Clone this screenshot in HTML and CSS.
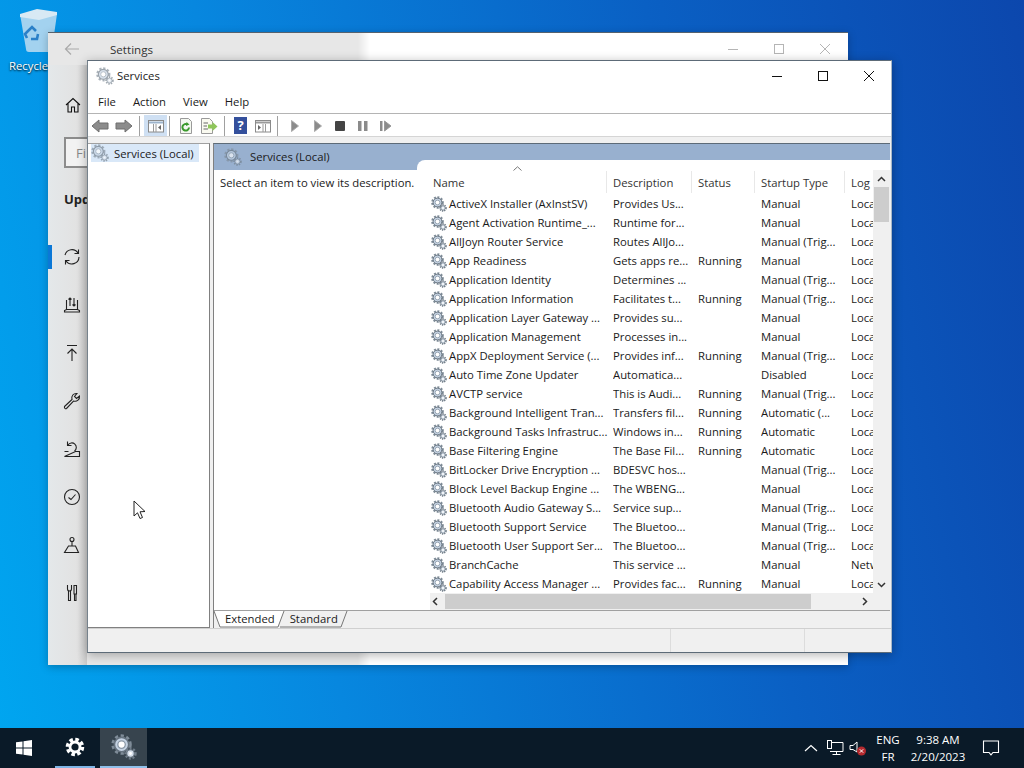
FILE: index.html
```html
<!DOCTYPE html>
<html lang="en">
<head>
    <meta charset="UTF-8">
    <title>Services</title>
    <link rel="stylesheet" href="styles.css">
</head>
<body>
    <svg class="defs" width="0" height="0">
        <symbol id="gear" viewBox="0 0 16 16">
            <circle cx="6.5" cy="6.5" r="5.2" fill="none" stroke="#7f8c98" stroke-width="2.2" stroke-dasharray="1.9 1.5"/>
            <circle cx="6.5" cy="6.5" r="4.4" fill="#c4d2e2" stroke="#66737f" stroke-width="1"/>
            <circle cx="6.5" cy="6.5" r="2.3" fill="#fff" stroke="#8a98a6" stroke-width=".8"/>
            <circle cx="12" cy="12" r="3" fill="none" stroke="#6f7c88" stroke-width="1.6" stroke-dasharray="1.2 1"/>
            <circle cx="12" cy="12" r="2.3" fill="#d5dfea" stroke="#66737f" stroke-width=".7"/>
            <circle cx="12" cy="12" r=".9" fill="#fff"/>
        </symbol>
    </svg>

    <div class="desktop">
        <div class="recycle">
            <svg width="44" height="50" viewBox="0 0 44 50">
                <path d="M2 6 L8 41 Q8 44 11 44 L31 44 Q34 44 34 41 L39 6 Z" fill="#b5d8ef" fill-opacity=".9"/>
                <path d="M2 6 L19 1 L39 4 L39 7 L21 12 L2 9 Z" fill="#d8e9f4"/>
                <path d="M10 23 L14 19 L18 23 M20 26 L19 31 L13 31 M9 30 L7 26 L10 23" fill="none" stroke="#2a80c8" stroke-width="2.600"/>
            </svg>
            <span class="recycle-label">Recycle Bin</span>
        </div>

        <!-- settings window, behind -->
        <div class="window settings">
            <div class="settings-title">
                <svg class="settings-back" width="16" height="14" viewBox="0 0 16 14"><path d="M15 7H2M7 1.500L1.500 7L7 12.500" fill="none" stroke="#a9a9a9" stroke-width="1.200"/></svg>
                <span class="settings-name">Settings</span>
                <div class="caption dim">
                    <svg width="12" height="12" viewBox="0 0 12 12"><path d="M1 6.500H11" stroke="#b5b5b5"/></svg>
                    <svg width="12" height="12" viewBox="0 0 12 12"><rect x="1.500" y="1.500" width="9" height="9" fill="none" stroke="#b5b5b5"/></svg>
                    <svg width="12" height="12" viewBox="0 0 12 12"><path d="M1 1L11 11M11 1L1 11" stroke="#b5b5b5"/></svg>
                </div>
            </div>
            <div class="settings-body">
                <div class="rail">
                    <svg class="rail-home" width="16" height="16" viewBox="0 0 16 16"><path d="M1 8L8 1.500L15 8M3 6.500V15H6.500V10H9.500V15H13V6.500" fill="none" stroke="#111" stroke-width="1.100"/></svg>
                    <div class="rail-search">Fi</div>
                    <div class="rail-head">Upd</div>
                    <div class="rail-icons">
                        <div class="rail-item current"><svg width="18" height="18" viewBox="0 0 18 18"><path d="M2 7A7.200 7.200 0 0 1 15 5M16 9A7.200 7.200 0 0 1 3 13M15.500 1.500V5.500H11.500M2.500 16.500V12.500H6.500" fill="none" stroke="#222" stroke-width="1.100"/></svg></div>
                        <div class="rail-item"><svg width="18" height="18" viewBox="0 0 18 18"><path d="M3.500 4V13.500H14.500V4M1.500 16H16.500V14.500L14.500 13.500H3.500L1.500 14.500ZM7 10V2M5.500 3.500L7 2L8.500 3.500M11 2V10M9.500 8.500L11 10L12.500 8.500" fill="none" stroke="#222" stroke-width="1.100"/></svg></div>
                        <div class="rail-item"><svg width="18" height="18" viewBox="0 0 18 18"><path d="M4 1.500H14M9 17V5M4.500 9.500L9 5L13.500 9.500" fill="none" stroke="#222" stroke-width="1.100"/></svg></div>
                        <div class="rail-item"><svg width="18" height="18" viewBox="0 0 18 18"><path d="M1.500 14.500L9 7.500C8 4 10.500 1 14 1.500L11.500 4.500L13.500 6.500L16.500 4C17 7.500 14 10 10.500 9L3.500 16.500C2.500 17.200 1 16 1.500 14.500Z" fill="none" stroke="#222" stroke-width="1.100"/></svg></div>
                        <div class="rail-item"><svg width="18" height="18" viewBox="0 0 18 18"><path d="M1.500 11.500H5.500M12.500 11.500H16.500V16.500H1.500ZM5 5A4.500 4.500 0 1 1 11.500 11M4.500 1.500V5.500H8.500" fill="none" stroke="#222" stroke-width="1.100"/></svg></div>
                        <div class="rail-item"><svg width="18" height="18" viewBox="0 0 18 18"><circle cx="9" cy="9" r="7.500" fill="none" stroke="#222" stroke-width="1.100"/><path d="M5.500 9.500L8 11.500L12.500 6.500" fill="none" stroke="#222" stroke-width="1.100"/></svg></div>
                        <div class="rail-item"><svg width="18" height="18" viewBox="0 0 18 18"><circle cx="9" cy="3.500" r="2" fill="none" stroke="#222" stroke-width="1.100"/><path d="M9 5.500V10M5.500 10H12.500L15.500 16.500H1.500Z" fill="none" stroke="#222" stroke-width="1.100"/></svg></div>
                        <div class="rail-item"><svg width="18" height="18" viewBox="0 0 18 18"><path d="M4.500 1V5C4.500 6.200 5.300 7 6.500 7C7.700 7 8.500 6.200 8.500 5V1M5.500 7V16.500H7.500V7M11 1.500H13.500V10H11ZM11.500 10V16.500H13V10" fill="none" stroke="#222" stroke-width="1.100"/></svg></div>
                    </div>
                </div>
            </div>
        </div>

        <!-- services window, in front -->
        <div class="window services">
            <div class="titlebar">
                <svg class="pale" width="18" height="18"><use href="#gear"/></svg>
                <span>Services</span>
                <div class="caption">
                    <svg width="12" height="12" viewBox="0 0 12 12"><path d="M1 6.500H11" stroke="#111"/></svg>
                    <svg width="12" height="12" viewBox="0 0 12 12"><rect x="1.500" y="1.500" width="9" height="9" fill="none" stroke="#111"/></svg>
                    <svg width="12" height="12" viewBox="0 0 12 12"><path d="M1 1L11 11M11 1L1 11" stroke="#111"/></svg>
                </div>
            </div>
            <div class="menubar">
                <span>File</span><span>Action</span><span>View</span><span>Help</span>
            </div>
            <div class="toolbar">
                <svg class="tool" width="18" height="16" viewBox="0 0 18 16"><path d="M1 8L8 2V5H17V11H8V14Z" fill="#8c8c8c" stroke="#6f6f6f"/></svg>
                <svg class="tool" width="18" height="16" viewBox="0 0 18 16"><path d="M17 8L10 2V5H1V11H10V14Z" fill="#8c8c8c" stroke="#6f6f6f"/></svg>
                <i class="tool-sep"></i>
                <span class="tool-on"><svg width="16" height="14" viewBox="0 0 16 14"><rect x=".5" y="1.500" width="15" height="11.500" fill="#fff" stroke="#8a8a8a"/><path d="M1 3.500H15" stroke="#9db4cc" stroke-width="2"/><path d="M5.500 5V13M8 5V13" stroke="#9a9a9a"/><path d="M13 6V11L10 8.500Z" fill="#666"/></svg></span>
                <i class="tool-sep"></i>
                <svg class="tool" width="16" height="16" viewBox="0 0 16 16"><path d="M2.500 .5H10.500L13.500 3.500V15.500H2.500Z" fill="#f4f8f0" stroke="#9a9a9a"/><path d="M11 9.500A3.300 3.300 0 1 1 9.500 6.500" fill="none" stroke="#3a9a2c" stroke-width="2"/><path d="M8.500 4L11.500 6.500L8 8Z" fill="#3a9a2c"/></svg>
                <svg class="tool" width="18" height="16" viewBox="0 0 18 16"><path d="M1.500 .5H9.500L12.500 3.500V15.500H1.500Z" fill="#fafaf0" stroke="#9a9a9a"/><path d="M3.500 5H8M3.500 8H7M3.500 11H8" stroke="#666"/><path d="M8 6.500H12.500V4L17.500 8.500L12.500 13V10.500H8Z" fill="#8fc65a"/></svg>
                <i class="tool-sep"></i>
                <span class="tool-help">?</span>
                <svg class="tool" width="16" height="14" viewBox="0 0 16 14"><rect x=".5" y="1.500" width="15" height="11.500" fill="#fff" stroke="#8a8a8a"/><path d="M1 3.500H15" stroke="#9a9a9a" stroke-width="2"/><path d="M8 5V13M10.500 5V13" stroke="#9a9a9a"/><path d="M3 6V11L6 8.500Z" fill="#666"/></svg>
                <i class="tool-sep"></i>
                <svg class="tool-run" width="10" height="12" viewBox="0 0 10 12"><path d="M1.500 .5L8.500 6L1.500 11.500Z" fill="#8b8b8b" stroke="#aaa"/></svg>
                <svg class="tool-run" width="10" height="12" viewBox="0 0 10 12"><path d="M1.500 .5L8.500 6L1.500 11.500Z" fill="#8b8b8b" stroke="#aaa"/></svg>
                <svg class="tool-run stop" width="10" height="12" viewBox="0 0 10 12"><rect x="0" y="1" width="10" height="10" rx="1" fill="#444"/></svg>
                <svg class="tool-run" width="10" height="12" viewBox="0 0 10 12"><path d="M0 1H3.500V11H0ZM6 1H9.500V11H6Z" fill="#8b8b8b"/></svg>
                <svg class="tool-run stop" width="12" height="12" viewBox="0 0 12 12"><path d="M0 1H2.500V11H0Z" fill="#8b8b8b"/><path d="M4.500 1L11 6L4.500 11Z" fill="#8b8b8b" stroke="#999"/></svg>
            </div>

            <div class="workspace">
                <div class="tree">
                    <div class="tree-item">
                        <svg class="pale" width="18" height="18"><use href="#gear"/></svg>
                        <span>Services (Local)</span>
                    </div>
                </div>
                <div class="detail">
                    <div class="detail-head">
                        <svg class="pale" width="18" height="18"><use href="#gear"/></svg>
                        <span>Services (Local)</span>
                    </div>
                    <div class="detail-body">
                        <div class="description">Select an item to view its description.</div>
                        <div class="list">
                            <div class="list-main">
                                <div class="list-scroll">
                                    <div class="row head">
                                        <span class="sort">Name<svg class="sort-caret" width="9" height="5" viewBox="0 0 9 5"><path d="M.5 4.500L4.500 .8L8.500 4.500" fill="none" stroke="#777"/></svg></span><span>Description</span><span>Status</span><span>Startup Type</span><span>Log</span>
                                    </div>
                                    <div class="row"><span><svg width="16" height="16"><use href="#gear"/></svg>ActiveX Installer (AxInstSV)</span><span>Provides Us...</span><span></span><span>Manual</span><span>Local</span></div>
                                    <div class="row"><span><svg width="16" height="16"><use href="#gear"/></svg>Agent Activation Runtime_...</span><span>Runtime for...</span><span></span><span>Manual</span><span>Local</span></div>
                                    <div class="row"><span><svg width="16" height="16"><use href="#gear"/></svg>AllJoyn Router Service</span><span>Routes AllJo...</span><span></span><span>Manual (Trig...</span><span>Local</span></div>
                                    <div class="row"><span><svg width="16" height="16"><use href="#gear"/></svg>App Readiness</span><span>Gets apps re...</span><span>Running</span><span>Manual</span><span>Local</span></div>
                                    <div class="row"><span><svg width="16" height="16"><use href="#gear"/></svg>Application Identity</span><span>Determines ...</span><span></span><span>Manual (Trig...</span><span>Local</span></div>
                                    <div class="row"><span><svg width="16" height="16"><use href="#gear"/></svg>Application Information</span><span>Facilitates t...</span><span>Running</span><span>Manual (Trig...</span><span>Local</span></div>
                                    <div class="row"><span><svg width="16" height="16"><use href="#gear"/></svg>Application Layer Gateway ...</span><span>Provides su...</span><span></span><span>Manual</span><span>Local</span></div>
                                    <div class="row"><span><svg width="16" height="16"><use href="#gear"/></svg>Application Management</span><span>Processes in...</span><span></span><span>Manual</span><span>Local</span></div>
                                    <div class="row"><span><svg width="16" height="16"><use href="#gear"/></svg>AppX Deployment Service (...</span><span>Provides inf...</span><span>Running</span><span>Manual (Trig...</span><span>Local</span></div>
                                    <div class="row"><span><svg width="16" height="16"><use href="#gear"/></svg>Auto Time Zone Updater</span><span>Automatica...</span><span></span><span>Disabled</span><span>Local</span></div>
                                    <div class="row"><span><svg width="16" height="16"><use href="#gear"/></svg>AVCTP service</span><span>This is Audi...</span><span>Running</span><span>Manual (Trig...</span><span>Local</span></div>
                                    <div class="row"><span><svg width="16" height="16"><use href="#gear"/></svg>Background Intelligent Tran...</span><span>Transfers fil...</span><span>Running</span><span>Automatic (...</span><span>Local</span></div>
                                    <div class="row"><span><svg width="16" height="16"><use href="#gear"/></svg>Background Tasks Infrastruc...</span><span>Windows in...</span><span>Running</span><span>Automatic</span><span>Local</span></div>
                                    <div class="row"><span><svg width="16" height="16"><use href="#gear"/></svg>Base Filtering Engine</span><span>The Base Fil...</span><span>Running</span><span>Automatic</span><span>Local</span></div>
                                    <div class="row"><span><svg width="16" height="16"><use href="#gear"/></svg>BitLocker Drive Encryption ...</span><span>BDESVC hos...</span><span></span><span>Manual (Trig...</span><span>Local</span></div>
                                    <div class="row"><span><svg width="16" height="16"><use href="#gear"/></svg>Block Level Backup Engine ...</span><span>The WBENG...</span><span></span><span>Manual</span><span>Local</span></div>
                                    <div class="row"><span><svg width="16" height="16"><use href="#gear"/></svg>Bluetooth Audio Gateway S...</span><span>Service sup...</span><span></span><span>Manual (Trig...</span><span>Local</span></div>
                                    <div class="row"><span><svg width="16" height="16"><use href="#gear"/></svg>Bluetooth Support Service</span><span>The Bluetoo...</span><span></span><span>Manual (Trig...</span><span>Local</span></div>
                                    <div class="row"><span><svg width="16" height="16"><use href="#gear"/></svg>Bluetooth User Support Ser...</span><span>The Bluetoo...</span><span></span><span>Manual (Trig...</span><span>Local</span></div>
                                    <div class="row"><span><svg width="16" height="16"><use href="#gear"/></svg>BranchCache</span><span>This service ...</span><span></span><span>Manual</span><span>Netw</span></div>
                                    <div class="row"><span><svg width="16" height="16"><use href="#gear"/></svg>Capability Access Manager ...</span><span>Provides fac...</span><span>Running</span><span>Manual</span><span>Local</span></div>
                                </div>
                                <div class="vscroll">
                                    <svg width="9" height="6" viewBox="0 0 9 6"><path d="M1 5L4.500 1.500L8 5" fill="none" stroke="#333" stroke-width="1.500"/></svg>
                                    <div class="vthumb"></div>
                                    <svg class="vdown" width="9" height="6" viewBox="0 0 9 6"><path d="M1 1L4.500 4.500L8 1" fill="none" stroke="#333" stroke-width="1.500"/></svg>
                                </div>
                            </div>
                            <div class="hscroll">
                                <svg width="6" height="9" viewBox="0 0 6 9"><path d="M5 1L1.500 4.500L5 8" fill="none" stroke="#333" stroke-width="1.500"/></svg>
                                <div class="hthumb"></div>
                                <svg width="6" height="9" viewBox="0 0 6 9"><path d="M1 1L4.500 4.500L1 8" fill="none" stroke="#333" stroke-width="1.500"/></svg>
                            </div>
                        </div>
                    </div>
                    <div class="tabs">
                        <span class="tab-extended">Extended</span>
                        <span class="tab-standard">Standard</span>
                        <svg class="tab-lines" width="140" height="17" viewBox="0 0 140 17">
                            <path d="M0 0L6 16H64L70 0" fill="#fff" stroke="#777"/>
                            <path d="M66 16H127L133 0" fill="none" stroke="#777"/>
                        </svg>
                    </div>
                </div>
            </div>
            <div class="statusbar"><i></i><i></i></div>
        </div>

        <div class="cursor">
            <svg width="14" height="20" viewBox="0 0 14 20"><path d="M1 1V16L4.500 12.800L7 18.500L9.500 17.500L7 11.800L12 11.500Z" fill="#fff" stroke="#222" stroke-width="1"/></svg>
        </div>

        <div class="taskbar">
            <div class="task-start">
                <svg width="16" height="16" viewBox="0 0 16 16"><path d="M0 2.300L6.500 1.400V7.500H0ZM7.500 1.200L16 0V7.500H7.500ZM0 8.500H6.500V14.600L0 13.700ZM7.500 8.500H16V16L7.500 14.800Z" fill="#fff"/></svg>
            </div>
            <div class="task-app open">
                <svg width="20" height="20" viewBox="0 0 20 20"><circle cx="10" cy="10" r="7.500" fill="none" stroke="#fff" stroke-width="3.500" stroke-dasharray="3.500 2.400"/><circle cx="10" cy="10" r="5" fill="none" stroke="#fff" stroke-width="2.800"/></svg>
            </div>
            <div class="task-app active">
                <svg width="26" height="26" viewBox="0 0 16 16"><use href="#gear"/></svg>
            </div>
            <div class="tray">
                <svg width="14" height="8" viewBox="0 0 14 8"><path d="M1 7L7 1.500L13 7" fill="none" stroke="#fff" stroke-width="1.200"/></svg>
                <svg class="tray-net" width="18" height="16" viewBox="0 0 18 16"><path d="M4 2.500H17V11.500H4M10.500 11.500V14.500M6.500 14.500H14.500" fill="none" stroke="#fff"/><rect x="1.500" y=".5" width="4" height="8" fill="#0b1a28" stroke="#fff"/></svg>
                <svg class="tray-sound" width="18" height="16" viewBox="0 0 18 16"><path d="M1 5.500H4L8 2V12L4 9.500H1Z" fill="none" stroke="#fff"/><circle cx="12.500" cy="11" r="4.500" fill="#b3292e"/><path d="M10.800 9.300L14.200 12.700M14.200 9.300L10.800 12.700" stroke="#fff"/></svg>
                <div class="lang"><span>ENG</span><span>FR</span></div>
                <div class="clock"><span>9:38 AM</span><span>2/20/2023</span></div>
                <svg class="notify" width="18" height="16" viewBox="0 0 18 16"><path d="M1.500 1H16.500V12.500H11L9 14.800L7 12.500H1.500Z" fill="none" stroke="#fff" stroke-width="1.100"/></svg>
            </div>
        </div>
    </div>
</body>
</html>
```

FILE: styles.css
```css
body {
    margin: 0;
    font-family: "Open Sans", "Noto Sans", sans-serif;
    font-size: 11.3px;
    color: #1a1a1a;
    overflow: hidden;
}

.defs {
    position: absolute;
}

.pale {
    opacity: 0.65;
    flex: none;
}

.desktop {
    position: relative;
    width: 1024px;
    height: 768px;
    overflow: hidden;
    background: linear-gradient(78deg, #00a6f0 0%, #0787df 30%, #0a60c4 68%, #0c47ad 100%);
}

/* desktop icon */
.recycle {
    position: absolute;
    left: 5px;
    top: 8px;
    width: 66px;
    display: flex;
    flex-direction: column;
    align-items: flex-start;
}

.recycle svg {
    margin-left: 13px;
}

.recycle-label {
    margin-left: 4px;
    color: #fff;
    white-space: nowrap;
    text-shadow: 0 1px 2px #000;
}

/* windows */
.window {
    position: absolute;
    box-sizing: border-box;
    display: flex;
    flex-direction: column;
}

.settings {
    left: 48px;
    top: 32px;
    width: 800px;
    height: 633px;
    background: linear-gradient(to right, #e7e7e7 0, #e7e7e7 310px, #fff 322px);
    border-top: 1px solid #56626e;
    box-shadow: 0 2px 8px rgba(0, 0, 0, 0.25);
}

.settings-title {
    height: 32px;
    display: flex;
    align-items: center;
    padding-left: 16px;
    flex: none;
}

.settings-back {
    margin-right: 30px;
}

.settings-name {
    font-size: 11.6px;
    color: #333;
}

.caption {
    margin-left: auto;
    display: flex;
    gap: 34px;
    padding-right: 17px;
}

.settings-body {
    flex: 1;
    display: flex;
}

.rail {
    width: 39px;
    display: flex;
    flex-direction: column;
    overflow: hidden;
    background: linear-gradient(to right, #e4e8ea, #e2e2e2 75%, #c9c9c9);
}

.rail-home {
    margin: 32px 0 0 17px;
    flex: none;
}

.rail-search {
    box-sizing: border-box;
    width: 39px;
    height: 31px;
    margin: 24px 0 0 16px;
    padding: 5px 0 0 10px;
    border: 2px solid #8c8c8c;
    border-right: none;
    background: #f2f2f2;
    color: #888;
    font-size: 13px;
    flex: none;
}

.rail-head {
    margin: 22px 0 0 16px;
    font-size: 13px;
    font-weight: 700;
    color: #222;
    flex: none;
}

.rail-icons {
    display: flex;
    flex-direction: column;
    gap: 24px;
    margin-top: 37px;
}

.rail-item {
    height: 24px;
    display: flex;
    align-items: center;
    padding-left: 15px;
}

.rail-item.current {
    border-left: 4px solid #0b78d7;
    padding-left: 11px;
}

.services {
    left: 87px;
    top: 60px;
    width: 805px;
    height: 593px;
    background: #fff;
    border: 1px solid #5d6b78;
    border-left-color: #76828c;
    border-right-color: #a9b8c6;
    box-shadow: 0 2px 10px rgba(0, 0, 0, 0.3);
}

.titlebar {
    height: 29px;
    display: flex;
    align-items: center;
    padding: 0 16px 0 8px;
    gap: 3px;
    flex: none;
}

.titlebar .caption {
    gap: 34px;
    padding-right: 0;
}

.menubar {
    height: 22px;
    display: flex;
    align-items: center;
    gap: 17px;
    padding: 0 0 1px 10px;
    border-bottom: 1px solid #b4b4b4;
    flex: none;
}

.toolbar {
    height: 21px;
    display: flex;
    align-items: center;
    padding-top: 1px;
    border-bottom: 1px solid #d5d5d5;
    flex: none;
}

.tool {
    margin: 0 3px;
}

.tool-sep {
    width: 1px;
    height: 20px;
    margin: 0 5px 0 3px;
    background: #a0a0a0;
}

.tool-on {
    width: 23px;
    height: 21px;
    margin: 0 -1px;
    display: flex;
    align-items: center;
    justify-content: center;
    background: #cfe0f3;
}

.tool-help {
    width: 13px;
    height: 17px;
    margin: 0 5px 0 4px;
    background: #34509c;
    color: #fff;
    font-weight: 700;
    font-size: 13px;
    line-height: 17px;
    text-align: center;
}

.tool-run {
    margin-left: 13px;
}

.tool-run.stop {
    margin-left: 12px;
}

.tool-sep + .tool-run {
    margin-left: 7px;
}

.workspace {
    flex: 1;
    display: flex;
    gap: 3px;
    padding-top: 6px;
    background: #f0f0f0;
    min-height: 0;
}

.tree {
    width: 118px;
    background: #fff;
    border-right: 1px solid #808080;
    border-top: 1px solid #a0a0a0;
    border-bottom: 1px solid #808080;
    padding: 0 0 0 3px;
    flex: none;
}

.tree-item {
    width: 108px;
    height: 18px;
    display: flex;
    align-items: center;
    gap: 5px;
    background: #d9e8f8;
    white-space: nowrap;
}

.detail {
    flex: 1;
    min-width: 0;
    display: flex;
    flex-direction: column;
    border-left: 1px solid #808080;
    border-top: 1px solid #5d6b78;
    margin-right: 1px;
}

.detail-head {
    height: 25px;
    display: flex;
    align-items: center;
    gap: 8px;
    padding: 0 0 1px 10px;
    background: #98b0cf;
    flex: none;
}

.detail-body {
    flex: 1;
    display: flex;
    min-height: 0;
    background: #fff;
    position: relative;
}

.description {
    width: 197px;
    padding: 5px 0 0 6px;
    white-space: nowrap;
    flex: none;
}

/* the list overlaps the blue header a little */
.list {
    flex: 1;
    min-width: 0;
    margin-top: -10px;
    background: #fff;
    border-top-left-radius: 8px;
    display: flex;
    flex-direction: column;
    position: relative;
}

.list-main {
    flex: 1;
    display: flex;
    min-height: 0;
}

.list-scroll {
    flex: 1;
    min-width: 0;
    overflow: hidden;
    padding-top: 13px;
}

.row {
    height: 19px;
    display: grid;
    grid-template-columns: 182px 85px 63px 90px 60px;
    align-items: center;
    padding-left: 14px;
    white-space: nowrap;
}

.row span {
    display: flex;
    align-items: center;
    gap: 2px;
    overflow: hidden;
}

.row svg {
    flex: none;
}

.head {
    color: #333;
    padding-left: 16px;
    padding-bottom: 2px;
    grid-template-columns: 180px 85px 63px 90px 60px;
}

.row.head span {
    position: relative;
    overflow: visible;
}

/* faint column dividers */
.row.head span::after {
    content: "";
    position: absolute;
    right: 6px;
    top: -4px;
    height: 22px;
    width: 1px;
    background: #e8e8e8;
}

.row.head .sort-caret {
    position: absolute;
    left: 80px;
    top: -9px;
}

.vscroll {
    width: 17px;
    margin-top: 10px;
    background: #f0f0f0;
    display: flex;
    flex-direction: column;
    align-items: center;
    padding-top: 6px;
    flex: none;
}

.vthumb {
    width: 15px;
    height: 35px;
    margin-top: 5px;
    background: #cdcdcd;
}

.vdown {
    margin-top: auto;
    margin-bottom: 5px;
}

.hscroll {
    height: 17px;
    margin-left: 13px;
    background: #f0f0f0;
    display: flex;
    align-items: center;
    padding: 0 22px 0 2px;
    gap: 7px;
    flex: none;
}

.hthumb {
    width: 366px;
    height: 15px;
    background: #cdcdcd;
    margin-right: auto;
}

.tabs {
    height: 17px;
    position: relative;
    display: flex;
    background: #f0f0f0;
    border-top: 1px solid #a0a0a0;
    flex: none;
}

.tab-extended,
.tab-standard {
    position: relative;
    z-index: 1;
    line-height: 16px;
}

.tab-extended {
    margin-left: 11px;
}

.tab-standard {
    margin-left: 15px;
}

.tab-lines {
    position: absolute;
    left: 0;
    top: 0;
}

.statusbar {
    height: 23px;
    display: flex;
    justify-content: flex-end;
    gap: 133px;
    padding-right: 86px;
    background: #f0f0f0;
    border-top: 1px solid #d0d0d0;
    flex: none;
}

.statusbar i {
    width: 1px;
    background: #dcdcdc;
}

.cursor {
    position: absolute;
    left: 133px;
    top: 500px;
    display: flex;
}

/* taskbar */
.taskbar {
    position: absolute;
    left: 0;
    right: 0;
    bottom: 0;
    height: 40px;
    display: flex;
    background: #0a1a28;
    color: #fff;
}

.task-start {
    width: 48px;
    display: flex;
    align-items: center;
    justify-content: center;
}

.task-app {
    display: flex;
    align-items: center;
    justify-content: center;
    box-sizing: border-box;
}

.task-app.open {
    width: 40px;
    margin: 0 5px 0 7px;
    border-bottom: 2px solid #7fb5e6;
}

.task-app.active {
    width: 47px;
    background: #37444e;
    border-bottom: 2px solid #8fc0ea;
}

.tray {
    margin-left: auto;
    display: flex;
    align-items: center;
}

.tray-net {
    margin-left: 8px;
}

.tray-sound {
    margin-left: 5px;
}

.lang,
.clock {
    display: flex;
    flex-direction: column;
    align-items: center;
    line-height: 17px;
    font-size: 11.5px;
}

.lang {
    margin-left: 8px;
    width: 26px;
}

.clock {
    margin-left: 5px;
    width: 64px;
}

.notify {
    margin: 0 24px 0 12px;
}
```
